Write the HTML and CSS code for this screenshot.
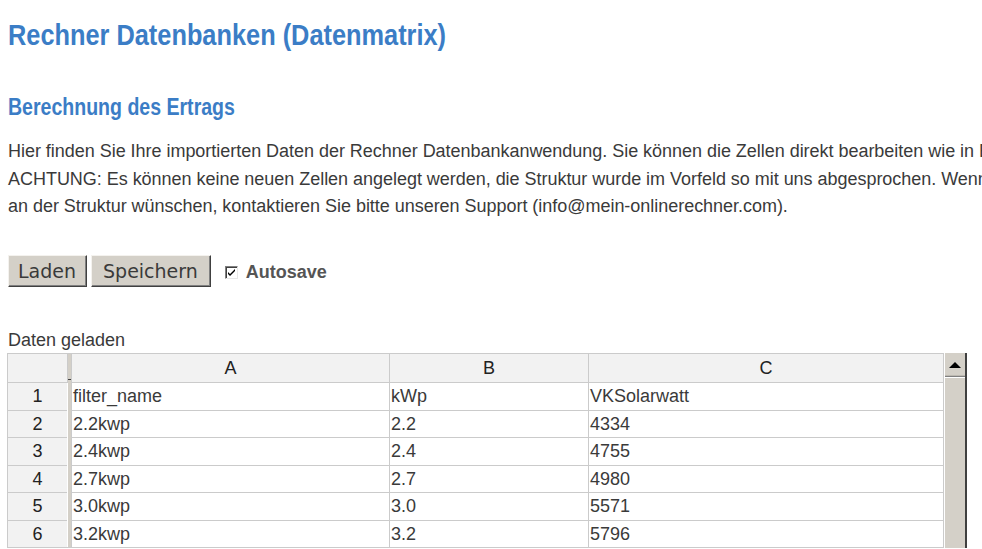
FILE: index.html
```html
<!DOCTYPE html>
<html lang="de">
<head>
<meta charset="utf-8">
<title>Rechner Datenbanken (Datenmatrix)</title>
<link rel="stylesheet" href="styles.css">
</head>
<body>
<div class="page">
  <h1 class="title">Rechner Datenbanken (Datenmatrix)</h1>
  <h2 class="subtitle">Berechnung des Ertrags</h2>
  <p class="intro">
    <span class="line">Hier finden Sie Ihre importierten Daten der Rechner Datenbankanwendung. Sie können die Zellen direkt bearbeiten wie in Excel.</span>
    <span class="line">ACHTUNG: Es können keine neuen Zellen angelegt werden, die Struktur wurde im Vorfeld so mit uns abgesprochen. Wenn Sie Änderungen</span>
    <span class="line">an der Struktur wünschen, kontaktieren Sie bitte unseren Support (info@mein-onlinerechner.com).</span>
  </p>
  <div class="toolbar">
    <button class="btn" type="button">Laden</button>
    <button class="btn" type="button">Speichern</button>
    <label class="autosave">
      <span class="check"><svg viewBox="0 0 9 9" width="9" height="9"><path d="M1 4 L3 6 L8 1 L8 3 L3 8 L1 6 Z" fill="#000"/></svg></span>
      <span class="autosave-text">Autosave</span>
    </label>
  </div>
  <div class="status">Daten geladen</div>
  <div class="grid">
    <table class="sheet">
      <colgroup>
        <col class="c-num"><col class="c-split"><col class="c-a"><col class="c-b"><col class="c-c">
      </colgroup>
      <tbody>
        <tr class="head">
          <th class="corner"></th>
          <td class="split" rowspan="7"><span class="grip"></span></td>
          <th>A</th><th>B</th><th>C</th>
        </tr>
        <tr><th class="num">1</th><td>filter_name</td><td>kWp</td><td>VKSolarwatt</td></tr>
        <tr><th class="num">2</th><td>2.2kwp</td><td>2.2</td><td>4334</td></tr>
        <tr><th class="num">3</th><td>2.4kwp</td><td>2.4</td><td>4755</td></tr>
        <tr><th class="num">4</th><td>2.7kwp</td><td>2.7</td><td>4980</td></tr>
        <tr><th class="num">5</th><td>3.0kwp</td><td>3.0</td><td>5571</td></tr>
        <tr><th class="num">6</th><td>3.2kwp</td><td>3.2</td><td>5796</td></tr>
      </tbody>
    </table>
    <div class="scrollbar">
      <div class="sb-btn"><span class="sb-arrow"></span></div>
      <div class="sb-track"></div>
    </div>
  </div>
</div>
</body>
</html>
```
FILE: styles.css
```css
html, body {
  margin: 0;
  padding: 0;
  background: #fff;
  overflow: hidden;
}
body {
  font-family: "Liberation Sans", Arial, sans-serif;
  font-size: 18px;
  color: #3a3a3a;
}
.page {
  padding: 0 8px;
  width: 1300px;
}
.title {
  margin: 18px 0 0;
  font-family: "Liberation Sans", Arial, sans-serif;
  font-weight: bold;
  font-size: 29px;
  line-height: 34px;
  color: #3b7dc6;
  transform: scaleX(0.874);
  transform-origin: 0 50%;
  white-space: nowrap;
}
.subtitle {
  margin: 40px 0 0;
  font-family: "Liberation Sans", Arial, sans-serif;
  font-weight: bold;
  font-size: 24px;
  line-height: 30px;
  color: #3b7dc6;
  transform: scaleX(0.814);
  transform-origin: 0 50%;
  white-space: nowrap;
}
.intro {
  margin: 16px 0 0;
  line-height: 27.5px;
  letter-spacing: -0.03px;
}
.line {
  display: block;
  white-space: nowrap;
}
.toolbar {
  margin-top: 34px;
  display: flex;
  align-items: center;
  height: 32px;
}
.btn {
  font-family: "DejaVu Sans", Verdana, sans-serif;
  font-size: 19px;
  color: #3a3a3a;
  background: #d4d0c8;
  height: 32px;
  padding: 0 10px 0 9px;
  margin: 0 4px 0 0;
  border: 1px solid;
  border-color: #f4f2ee #404040 #404040 #f4f2ee;
  box-shadow: inset -1px -1px 0 #808080;
  line-height: 28px;
}
.btn + .btn {
  padding: 0 12px 0 11px;
}
.autosave {
  display: flex;
  align-items: center;
  margin: 4px 0 0 10px;
}
.check {
  width: 11px;
  height: 11px;
  border: 1px solid;
  border-color: #808080 #e8e8e8 #e8e8e8 #808080;
  box-shadow: inset 1px 1px 0 #404040;
  background: #fff;
  display: flex;
  align-items: center;
  justify-content: center;
}
.autosave-text {
  margin-left: 8px;
  font-weight: bold;
  color: #555;
}
.status {
  margin-top: 43px;
  line-height: 20px;
  color: #3a3a3a;
}
.grid {
  margin: 3px 0 0 -1px;
  display: flex;
  align-items: stretch;
  width: 960px;
}
.sheet {
  border-collapse: collapse;
  table-layout: fixed;
  width: 937px;
  border-left: 1px solid #c8c8c8;
}
.c-num { width: 60px; }
.c-split { width: 4px; }
.c-a { width: 318px; }
.c-b { width: 199px; }
.c-c { width: 355px; }
.sheet th, .sheet td {
  border: 1px solid #cbcbcb;
  padding: 1px 0 0 1px;
  font-weight: normal;
  text-align: left;
  white-space: nowrap;
  overflow: hidden;
  height: 25.5px;
  line-height: 25px;
  color: #3a3a3a;
}
.sheet .head th {
  height: 27.5px;
  background: #f2f2f2;
  text-align: center;
  color: #222;
  padding: 1px 0 0;
}
.sheet th.num {
  background: #f2f2f2;
  text-align: center;
  padding: 1px 0 0;
  color: #222;
}
.sheet td.split {
  background: #d4d0c8;
  padding: 0;
  border-left: 1px solid #ffffff;
  border-right: 0;
  vertical-align: top;
  position: relative;
}
.grip {
  position: absolute;
  left: 0;
  top: 25px;
  width: 4px;
  height: 1px;
  background: #404040;
}
.scrollbar {
  width: 21px;
  display: flex;
  flex-direction: column;
  background: #d4d0c8;
  border-right: 2px solid #404040;
  border-left: 1px solid #ffffff;
}
.sb-btn {
  height: 22px;
  margin-top: 1px;
  border-bottom: 1px solid #808080;
  box-shadow: inset 0 -1px 0 #bdb9b1;
  display: flex;
  align-items: center;
  justify-content: center;
  background: #d4d0c8;
}
.sb-arrow {
  width: 0;
  height: 0;
  border-left: 6px solid transparent;
  border-right: 6px solid transparent;
  border-bottom: 6px solid #000;
}
.sb-track {
  flex: 1;
  border-top: 1px solid #fff;
  background: #d4d0c8;
}
```
